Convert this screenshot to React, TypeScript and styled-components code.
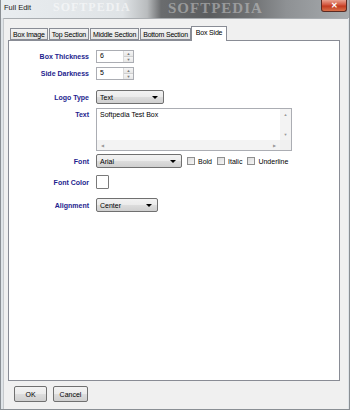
import styled, { createGlobalStyle } from 'styled-components';

const Global = createGlobalStyle`
  html, body { margin: 0; padding: 0; background: #f0f0f0; }
  body { font-family: "Liberation Sans", Arial, sans-serif; font-size: 7px; color: #000; }
`;

const Window = styled.div`
  width: 350px;
  height: 410px;
  box-sizing: border-box;
  display: flex;
  flex-direction: column;
  background: #dfe4e8;
  border-left: 1px solid #8a8f94;
  border-right: 1px solid #8a8f94;
  border-bottom: 1px solid #8a8f94;
  overflow: hidden;
`;

const TitleBar = styled.div`
  position: relative;
  height: 18px;
  flex: none;
  display: flex;
  align-items: center;
  padding-left: 3px;
  padding-bottom: 3px;
  box-sizing: border-box;
  background: linear-gradient(90deg, #e9edf0 0%, #dfe3e6 35%, #b9bcbe 42%, #6a6c6e 46%, #5b5d5f 60%, #707274 72%, #8e9194 82%, #a9adb0 100%);
  overflow: hidden;
`;

const TitleText = styled.span`
  font-family: "Liberation Sans", Arial, sans-serif;
  font-size: 7.5px;
  color: #1b1b1b;
  position: relative;
  z-index: 1;
`;

const Watermark = styled.span<{ $left: number; $size: number; $color: string }>`
  position: absolute;
  left: ${p => p.$left}px;
  top: 0;
  font-family: "Liberation Serif", serif;
  font-weight: bold;
  font-size: ${p => p.$size}px;
  letter-spacing: 1px;
  color: ${p => p.$color};
`;

const CloseButton = styled.div`
  position: absolute;
  right: 2px;
  top: 0;
  width: 26px;
  height: 12px;
  border: 1px solid #5a2a22;
  border-top: none;
  border-radius: 0 0 3px 3px;
  box-sizing: border-box;
  background: linear-gradient(#e9a290 0%, #d2553d 45%, #c23b20 55%, #d9704a 100%);
  display: flex;
  align-items: center;
  justify-content: center;
  color: #fff;
  font-size: 8px;
  font-weight: bold;
`;

const Client = styled.div`
  flex: 1;
  display: flex;
  flex-direction: column;
  margin-left: 2px;
  margin-right: 1px;
  background: #f0f0f0;
  border-top: 1px solid #a9adb1;
  border-left: 1px solid #c6c9cc;
  padding: 7px 8px 0 4px;
  box-sizing: border-box;
`;

const TabStrip = styled.div`
  display: flex;
  align-items: flex-end;
  height: 14px;
  padding-left: 2px;
  position: relative;
  z-index: 1;
`;

const Tab = styled.div<{ $active?: boolean }>`
  height: ${p => (p.$active ? 15 : 12)}px;
  box-sizing: border-box;
  padding: ${p => (p.$active ? '2px 4px 0' : '1px 2px 0')};
  margin-left: ${p => (p.$active ? -1 : 0)}px;
  margin-right: ${p => (p.$active ? -1 : 1)}px;
  margin-bottom: ${p => (p.$active ? -1 : 0)}px;
  border: 1px solid #898c95;
  border-bottom: ${p => (p.$active ? 'none' : '1px solid #898c95')};
  background: ${p => (p.$active ? '#fff' : 'linear-gradient(#f3f3f3, #e3e3e3)')};
  display: flex;
  align-items: ${p => (p.$active ? 'flex-start' : 'center')};
  letter-spacing: -0.2px;
  white-space: nowrap;
`;

const Panel = styled.div`
  height: 341px;
  background: #fff;
  border: 1px solid #898c95;
  box-sizing: border-box;
  padding-top: 9px;
  display: flex;
  flex-direction: column;
`;

const Row = styled.div<{ $mt: number; $center?: boolean }>`
  display: grid;
  grid-template-columns: 80px auto;
  column-gap: 7px;
  align-items: ${p => (p.$center ? 'center' : 'start')};
  margin-top: ${p => p.$mt}px;
`;

const Label = styled.div<{ $offset?: number }>`
  text-align: right;
  font-weight: bold;
  color: #1e1e8e;
  padding-top: ${p => p.$offset ?? 0}px;
  white-space: nowrap;
`;

const Controls = styled.div`
  display: flex;
  align-items: center;
  gap: 5px;
`;

const Spin = styled.div`
  width: 38px;
  height: 13px;
  box-sizing: border-box;
  border: 1px solid #abadb3;
  display: flex;
  background: #fff;
`;

const SpinValue = styled.div`
  flex: 1;
  padding: 1px 0 0 3px;
`;

const SpinButtons = styled.div`
  width: 9px;
  display: flex;
  flex-direction: column;
  border-left: 1px solid #dadada;
`;

const SpinBtn = styled.div`
  flex: 1;
  background: linear-gradient(#f6f6f6, #e6e6e6);
  display: flex;
  align-items: center;
  justify-content: center;
  font-size: 4px;
  color: #777;
  line-height: 1;
  & + & { border-top: 1px solid #cfcfcf; }
`;

const Combo = styled.div<{ $w: number }>`
  width: ${p => p.$w}px;
  height: 14px;
  box-sizing: border-box;
  border: 1px solid #707070;
  border-radius: 2px;
  background: linear-gradient(#f2f2f2 0%, #ebebeb 50%, #dddddd 51%, #cfcfcf 100%);
  display: flex;
  align-items: center;
  justify-content: space-between;
  padding: 0 5px 0 3px;
`;

const Arrow = styled.span`
  width: 0;
  height: 0;
  border-left: 3px solid transparent;
  border-right: 3px solid transparent;
  border-top: 3px solid #000;
`;

const TextArea = styled.div`
  width: 196px;
  height: 43px;
  box-sizing: border-box;
  border: 1px solid #abadb3;
  display: grid;
  grid-template-columns: 1fr 11px;
  grid-template-rows: 1fr 10px;
  background: #fff;
`;

const TextContent = styled.div`
  padding: 2px 3px;
`;

const VScroll = styled.div`
  background: #f3f3f3;
  display: flex;
  flex-direction: column;
  justify-content: space-between;
  align-items: center;
  font-size: 4px;
  color: #999;
  padding: 3px 0;
`;

const HScroll = styled.div`
  background: #f3f3f3;
  display: flex;
  justify-content: space-between;
  align-items: center;
  font-size: 4px;
  color: #999;
  padding: 0 4px;
`;

const Corner = styled.div`
  background: #f0f0f0;
`;

const Check = styled.label`
  display: flex;
  align-items: center;
  gap: 3px;
`;

const CheckBox = styled.span`
  width: 8px;
  height: 8px;
  box-sizing: border-box;
  border: 1px solid #8f8f8f;
  background: linear-gradient(135deg, #dcdcdc, #f6f6f6);
`;

const ColorSwatch = styled.div`
  width: 13px;
  height: 14px;
  box-sizing: border-box;
  border: 1px solid #7a7a7a;
  border-radius: 1px;
  background: #fff;
`;

const Footer = styled.div`
  display: flex;
  gap: 6px;
  padding: 5px 0 0 6px;
`;

const Button = styled.div<{ $w: number }>`
  width: ${p => p.$w}px;
  height: 16px;
  box-sizing: border-box;
  border: 1px solid #707070;
  border-radius: 2px;
  background: linear-gradient(#f2f2f2 0%, #ebebeb 50%, #dddddd 51%, #cfcfcf 100%);
  display: flex;
  align-items: center;
  justify-content: center;
`;

export default function App() {
  return (
    <>
      <Global />
      <Window>
        <TitleBar>
          <TitleText>Full Edit</TitleText>
          <Watermark $left={52} $size={12} $color="rgba(255,255,255,0.55)">SOFTPEDIA</Watermark>
          <Watermark $left={167} $size={15} $color="rgba(200,200,200,0.55)">SOFTPEDIA</Watermark>
          <CloseButton>✕</CloseButton>
        </TitleBar>
        <Client>
          <TabStrip>
            <Tab>Box Image</Tab>
            <Tab>Top Section</Tab>
            <Tab>Middle Section</Tab>
            <Tab>Bottom Section</Tab>
            <Tab $active>Box Side</Tab>
          </TabStrip>
          <Panel>
            <Row $mt={0} $center>
              <Label>Box Thickness</Label>
              <Spin>
                <SpinValue>6</SpinValue>
                <SpinButtons>
                  <SpinBtn>▲</SpinBtn>
                  <SpinBtn>▼</SpinBtn>
                </SpinButtons>
              </Spin>
            </Row>
            <Row $mt={4} $center>
              <Label>Side Darkness</Label>
              <Spin>
                <SpinValue>5</SpinValue>
                <SpinButtons>
                  <SpinBtn>▲</SpinBtn>
                  <SpinBtn>▼</SpinBtn>
                </SpinButtons>
              </Spin>
            </Row>
            <Row $mt={10} $center>
              <Label>Logo Type</Label>
              <Combo $w={68}>
                Text
                <Arrow />
              </Combo>
            </Row>
            <Row $mt={4}>
              <Label $offset={3}>Text</Label>
              <TextArea>
                <TextContent>Softpedia Test Box</TextContent>
                <VScroll>
                  <span>▲</span>
                  <span>▼</span>
                </VScroll>
                <HScroll>
                  <span>◀</span>
                  <span>▶</span>
                </HScroll>
                <Corner />
              </TextArea>
            </Row>
            <Row $mt={3} $center>
              <Label>Font</Label>
              <Controls>
                <Combo $w={86}>
                  Arial
                  <Arrow />
                </Combo>
                <Check>
                  <CheckBox />
                  Bold
                </Check>
                <Check>
                  <CheckBox />
                  Italic
                </Check>
                <Check>
                  <CheckBox />
                  Underline
                </Check>
              </Controls>
            </Row>
            <Row $mt={7} $center>
              <Label>Font Color</Label>
              <ColorSwatch />
            </Row>
            <Row $mt={9} $center>
              <Label>Alignment</Label>
              <Combo $w={62}>
                Center
                <Arrow />
              </Combo>
            </Row>
          </Panel>
          <Footer>
            <Button $w={33}>OK</Button>
            <Button $w={35}>Cancel</Button>
          </Footer>
        </Client>
      </Window>
    </>
  );
}
